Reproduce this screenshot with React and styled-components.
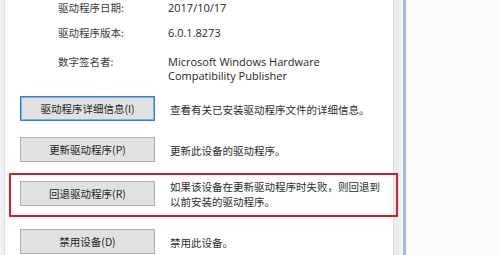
import React from 'react';
import styled, { createGlobalStyle } from 'styled-components';

const GlobalStyle = createGlobalStyle`
  html, body {
    margin: 0;
    padding: 0;
    background: #ffffff;
  }
`;

const CJK = `"Noto Sans CJK SC", "Noto Sans", sans-serif`;

// whole window strip
const Frame = styled.div`
  width: 500px;
  height: 255px;
  display: flex;
  overflow: hidden;
  background: #fafcfe;
`;

const LeftGutter = styled.div`
  width: 4px;
  background: #f0f0f0;
  border-right: 1px solid #dedede;
`;

// white tab page
const Panel = styled.div`
  box-sizing: border-box;
  width: 389px;
  background: #ffffff;
  border-right: 1px solid #dadada;
  display: flex;
  flex-direction: column;
`;

const SideGutter = styled.div`
  width: 9px;
  background: linear-gradient(to right, #ececec 0, #ececec 5px, #f4f4f4 5px);
`;

const WindowEdge = styled.div`
  width: 3px;
  background: #a7bcda;
`;

const Outside = styled.div`
  flex: 1;
  background: #fbfcfe;
`;

// driver properties on top
const InfoList = styled.div`
  display: flex;
  flex-direction: column;
  padding-left: 53px;
`;

const InfoRow = styled.div`
  display: grid;
  grid-template-columns: 110px 1fr;
  line-height: ${({ $lh }) => $lh || 16}px;
  margin-top: ${({ $mt }) => $mt || 0}px;
`;

const Label = styled.div`
  font-family: ${CJK};
  font-size: 10.5px;
  color: #3c3c3c;
`;

const Value = styled.div`
  font-family: "Open Sans", "Noto Sans", sans-serif;
  font-size: 11px;
  color: #262626;
`;

// buttons with descriptions
const Actions = styled.div`
  display: flex;
  flex-direction: column;
  padding-left: 15px;
  margin-top: 13px;
`;

const ActionRow = styled.div`
  position: relative;
  display: grid;
  grid-template-columns: 135px 1fr;
  column-gap: 15px;
  align-items: center;
  min-height: 25px;
  margin-top: ${({ $mt }) => $mt || 0}px;
`;

const Button = styled.button`
  box-sizing: border-box;
  width: 135px;
  height: 25px;
  padding: 0;
  background: #e1e1e1;
  border: 1px solid ${({ $focused }) => ($focused ? '#3a7fc6' : '#adadad')};
  box-shadow: ${({ $focused }) => ($focused ? 'inset 0 0 0 1px #7fb0e0' : 'none')};
  font-family: ${CJK};
  font-size: 10.5px;
  color: #262626;
  text-align: center;
`;

const Desc = styled.div`
  font-family: ${CJK};
  font-size: 10.5px;
  line-height: 15px;
  color: #2e2e2e;
  padding-top: 2px;
`;

// red annotation frame drawn over the rollback row
const Highlight = styled.div`
  position: absolute;
  left: -11px;
  right: -5px;
  top: -4px;
  height: 44px;
  box-sizing: border-box;
  border: 2px solid #d0202e;
  pointer-events: none;
`;

const info = [
  { label: '驱动程序日期:', value: ['2017/10/17'], mt: 0 },
  { label: '驱动程序版本:', value: ['6.0.1.8273'], mt: 9 },
  { label: '数字签名者:', value: ['Microsoft Windows Hardware', 'Compatibility Publisher'], mt: 14, lh: 14 },
];

const actions = [
  { btn: '驱动程序详细信息(I)', desc: ['查看有关已安装驱动程序文件的详细信息。'], focused: true, mt: 0 },
  { btn: '更新驱动程序(P)', desc: ['更新此设备的驱动程序。'], mt: 16 },
  { btn: '回退驱动程序(R)', desc: ['如果该设备在更新驱动程序时失败，则回退到', '以前安装的驱动程序。'], mt: 15, marked: true },
  { btn: '禁用设备(D)', desc: ['禁用此设备。'], mt: 20 },
];

export default function App() {
  return (
    <>
      <GlobalStyle />
      <Frame>
        <LeftGutter />
        <Panel>
          <InfoList>
            {info.map((row, i) => (
              <InfoRow key={i} $mt={row.mt} $lh={row.lh}>
                <Label>{row.label}</Label>
                <Value>
                  {row.value.map((v, j) => (
                    <div key={j}>{v}</div>
                  ))}
                </Value>
              </InfoRow>
            ))}
          </InfoList>
          <Actions>
            {actions.map((a, i) => (
              <ActionRow key={i} $mt={a.mt}>
                <Button $focused={a.focused}>{a.btn}</Button>
                <Desc>
                  {a.desc.map((d, j) => (
                    <div key={j}>{d}</div>
                  ))}
                </Desc>
                {a.marked && <Highlight />}
              </ActionRow>
            ))}
          </Actions>
        </Panel>
        <SideGutter />
        <WindowEdge />
        <Outside />
      </Frame>
    </>
  );
}
